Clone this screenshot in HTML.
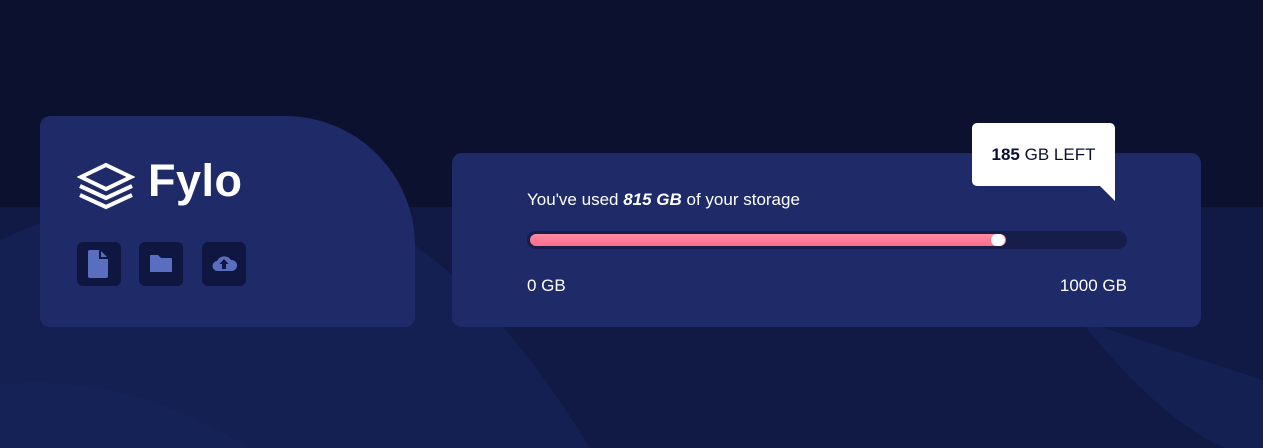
<!DOCTYPE html>
<html><head><style>
body{margin:0;width:1263px;height:448px;overflow:hidden;background:#0c1130;font-family:"Liberation Sans",sans-serif;position:relative}
.bg{position:absolute;left:0;top:0}
.card{position:absolute;background:#1f2a68}
.l{left:40px;top:116px;width:375px;height:211px;border-radius:10px 130px 10px 10px}
.r{left:452px;top:153px;width:749px;height:174px;border-radius:10px}
.ib{position:absolute;top:126px;width:44px;height:44px;background:#0f1640;border-radius:6px}
.t{position:absolute;color:#fff;font-size:17px}
.tip{position:absolute;left:972px;top:123px;width:143px;height:63px;background:#fff;border-radius:5px 5px 0 5px;color:#0b1030;font-size:17px;line-height:63px;text-align:center}
</style></head><body>
<svg class="bg" width="1263" height="448">
<rect x="0" y="207" width="1263" height="241" fill="#101a44"/>
<path d="M0 240 Q150 170 330 200 Q470 250 590 448 L0 448Z" fill="#132051"/>
<path d="M0 385 Q120 370 250 448 L0 448Z" fill="#152256"/>
<path d="M1080 320 Q1160 420 1225 448 L1263 448 L1263 380Z" fill="#132051"/>
</svg>
<div class="card l">
<svg style="position:absolute;left:37px;top:46px" width="58" height="48" viewBox="0 0 58 48">
<path d="M29 3 L54 15 L29 27 L4 15Z" fill="none" stroke="#fff" stroke-width="4" stroke-linejoin="miter"/>
<path d="M3 24 L29 36 L55 24" fill="none" stroke="#fff" stroke-width="4"/>
<path d="M3 33 L29 45 L55 33" fill="none" stroke="#fff" stroke-width="4"/>
</svg>
<div style="position:absolute;left:108px;top:39px;color:#fff;font-size:45px;font-weight:bold;letter-spacing:0.5px">Fylo</div>
<div class="ib" style="left:37px"><svg width="44" height="44"><path d="M13 8 H22 V17 H31 V34 a2 2 0 0 1 -2 2 H13 a2 2 0 0 1 -2 -2 V10 a2 2 0 0 1 2 -2Z" fill="#5a6ebf"/><path d="M24 9 L30 15 H24Z" fill="#5a6ebf"/></svg></div>
<div class="ib" style="left:99px"><svg width="44" height="44"><path d="M12 13 H19 L22 16 H32 a1 1 0 0 1 1 1 V30 H11 V14 a1 1 0 0 1 1 -1Z" fill="#5a6ebf"/></svg></div>
<div class="ib" style="left:162px"><svg width="44" height="44"><path d="M16 29 a5 5 0 0 1 -1 -10 a8 8 0 0 1 14 -1 a5.5 5.5 0 0 1 1 11Z" fill="#5a6ebf"/><path d="M22 17 L26.5 22 H24 V27 H20 V22 H17.5Z" fill="#0f1640"/></svg></div>
</div>
<div class="card r"></div>
<div class="t" style="left:527px;top:190px">You've used <b><i>815 GB</i></b> of your storage</div>
<div style="position:absolute;left:527px;top:231px;width:600px;height:18px;background:#171d4a;border-radius:9px"></div>
<div style="position:absolute;left:530px;top:234px;width:476px;height:12px;background:linear-gradient(#ff8aa0,#fd6b8d);border-radius:6px"></div>
<div style="position:absolute;left:991px;top:234px;width:14px;height:12px;background:#fff;border-radius:6px"></div>
<div class="t" style="left:527px;top:276px">0 GB</div>
<div class="t" style="right:136px;top:276px">1000 GB</div>
<div class="tip"><b>185</b> GB LEFT</div>
<svg style="position:absolute;left:1099px;top:185px" width="16" height="17"><path d="M0 0 H16 V16Z" fill="#fff"/></svg>
</body></html>
